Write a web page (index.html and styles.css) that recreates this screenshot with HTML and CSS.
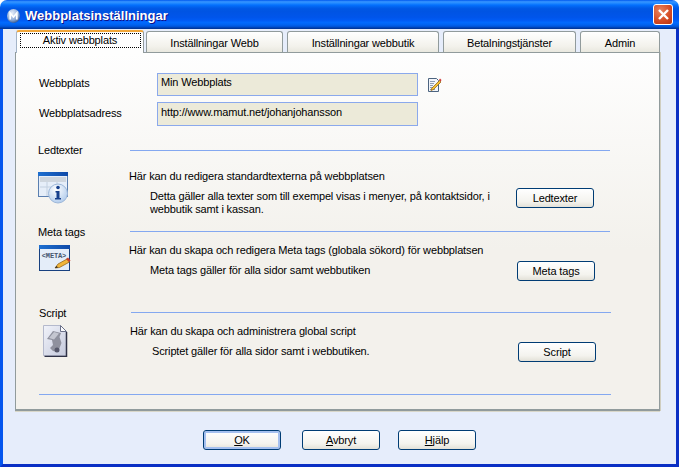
FILE: index.html
```html
<!DOCTYPE html>
<html lang="sv">
<head>
<meta charset="utf-8">
<title>Webbplatsinställningar</title>
<link rel="stylesheet" href="styles.css">
</head>
<body>
<div class="window">
  <header class="titlebar">
    <svg class="app-icon" width="13" height="14" viewBox="0 0 13 14">
      <defs><radialGradient id="ball" cx="0.4" cy="0.3" r="0.8"><stop offset="0" stop-color="#e6eefa"/><stop offset="0.6" stop-color="#8fabd6"/><stop offset="1" stop-color="#1d3f7a"/></radialGradient></defs>
      <ellipse cx="6.500" cy="7" rx="6.500" ry="7" fill="url(#ball)"/>
      <path d="M3.200 10.500V4L6.500 8 9.800 4v6.500" fill="none" stroke="#ffffff" stroke-width="1.700"/>
    </svg>
    <h1 class="title">Webbplatsinställningar</h1>
    <button class="close" type="button" aria-label="Stäng">
      <svg width="13" height="13" viewBox="0 0 13 13"><path d="M2 2l9 9M11 2l-9 9" stroke="#fff" stroke-width="2.400"/></svg>
    </button>
  </header>
  <div class="client">
    <nav class="tabs">
      <div class="tab tab-active"><span class="focus">Aktiv webbplats</span></div>
      <div class="tab tab-a">Inställningar Webb</div>
      <div class="tab tab-b">Inställningar webbutik</div>
      <div class="tab tab-c">Betalningstjänster</div>
      <div class="tab tab-d">Admin</div>
    </nav>
    <main class="panel">
      <div class="field-row field-row-1">
        <label class="field-label">Webbplats</label>
        <div class="field">Min Webbplats</div>
        <svg class="edit-icon" width="15" height="16" viewBox="0 0 15 16">
          <path d="M1.500 1.500h8l2 2v11h-10z" fill="#f2f5fa" stroke="#4d6480"/>
          <path d="M3 4.500h5M3 6.500h4M3 8.500h3M3 10.500h4M3 12.500h5" stroke="#8d9db3"/>
          <path d="M4.500 11.500l8-8 1.500 1.500-7.500 7.500-2.500 1z" fill="#f5c231" stroke="#8a5a10" stroke-width="0.700"/>
          <path d="M12 3l1-1.500 1.500 1.500-.8 1.500z" fill="#d23a3a"/>
        </svg>
      </div>
      <div class="field-row field-row-2">
        <label class="field-label">Webbplatsadress</label>
        <div class="field">http://www.mamut.net/johanjohansson</div>
      </div>

      <section class="section section-led">
        <div class="section-head"><span class="section-name">Ledtexter</span><span class="rule"></span></div>
        <div class="section-body">
          <div class="icon-cell">
            <svg width="32" height="32" viewBox="0 0 32 32">
              <defs>
                <linearGradient id="bar" x1="0" y1="0" x2="1" y2="0"><stop offset="0" stop-color="#1e6fd0"/><stop offset="1" stop-color="#0f4aa8"/></linearGradient>
                <radialGradient id="info" cx="0.4" cy="0.3" r="0.8"><stop offset="0" stop-color="#ffffff"/><stop offset="1" stop-color="#a9c6ea"/></radialGradient>
              </defs>
              <rect x="0.500" y="0.500" width="29" height="24" fill="#e6eef9" stroke="#5b7fb0"/>
              <rect x="0" y="0" width="30" height="4" fill="url(#bar)"/>
              <rect x="2" y="5" width="26" height="5" fill="#cfd6de"/>
              <path d="M9 10v14M19 10v6M2 15h18" stroke="#c3d0e0"/>
              <circle cx="20" cy="21.500" r="9.500" fill="url(#info)" stroke="#9db7d8"/>
              <circle cx="20" cy="15.500" r="1.800" fill="#17408c"/>
              <path d="M17.500 19h4v7h1.500v1.500h-6V26h1.500v-5.500h-1z" fill="#17408c"/>
            </svg>
          </div>
          <div class="copy">
            <p class="lead">Här kan du redigera standardtexterna på webbplatsen</p>
            <p class="detail">Detta gäller alla texter som till exempel visas i menyer, på kontaktsidor, i webbutik samt i kassan.</p>
          </div>
          <button class="btn btn-led" type="button">Ledtexter</button>
        </div>
      </section>

      <section class="section section-meta">
        <div class="section-head"><span class="section-name">Meta tags</span><span class="rule"></span></div>
        <div class="section-body">
          <div class="icon-cell">
            <svg width="32" height="27" viewBox="0 0 32 27">
              <rect x="0.500" y="0.500" width="30" height="25" fill="#e4edf9" stroke="#17407f"/>
              <rect x="0" y="0" width="31" height="4" fill="url(#bar)"/>
              <text class="meta-text" x="15" y="13" text-anchor="middle">&lt;META&gt;</text>
              <path d="M16 23l3-4 9-5 2.500 3-10 5.500z" fill="#f1b53a" stroke="#8a5a10" stroke-width="0.700"/>
              <path d="M27 14l2-1.500 2.500 3-1.500 1.500z" fill="#c8402e"/>
              <path d="M16 23l1.500-2 1.500 1.500z" fill="#222"/>
            </svg>
          </div>
          <div class="copy">
            <p class="lead">Här kan du skapa och redigera Meta tags (globala sökord) för webbplatsen</p>
            <p class="detail">Meta tags gäller för alla sidor samt webbutiken</p>
          </div>
          <button class="btn btn-meta" type="button">Meta tags</button>
        </div>
      </section>

      <section class="section section-script">
        <div class="section-head"><span class="section-name">Script</span><span class="rule"></span></div>
        <div class="section-body">
          <div class="icon-cell icon-script">
            <svg width="25" height="32" viewBox="0 0 25 32">
              <defs><linearGradient id="page" x1="0" y1="0" x2="1" y2="1"><stop offset="0" stop-color="#f1f3fa"/><stop offset="1" stop-color="#c4c9dc"/></linearGradient></defs>
              <path d="M0.500 0.500h17l6 6v24h-23z" fill="url(#page)" stroke="#b4b9cc"/>
              <path d="M23.500 7v24.500h-22" fill="none" stroke="#2e3146" stroke-width="1.500"/>
              <path d="M17.500 0.500v6h6z" fill="#fafbfe" stroke="#6a7088"/>
              <path d="M4 14l6-8 8 2-1.500 4 2 6-3.500 9-5-1-3-3 3-3-1-5z" fill="#8f919e"/>
              <path d="M6 13l5-6 5 1.500-5 6z" fill="#c4c6d0"/>
              <circle cx="14" cy="25" r="2.500" fill="#55576a"/>
            </svg>
          </div>
          <div class="copy">
            <p class="lead">Här kan du skapa och administrera global script</p>
            <p class="detail">Scriptet gäller för alla sidor samt i webbutiken.</p>
          </div>
          <button class="btn btn-script" type="button">Script</button>
        </div>
      </section>

      <div class="bottom-rule"></div>
    </main>
    <footer class="actions">
      <button class="btn btn-default" type="button"><u>O</u>K</button>
      <button class="btn" type="button"><u>A</u>vbryt</button>
      <button class="btn btn-help" type="button"><u>H</u>jälp</button>
    </footer>
  </div>
</div>
</body>
</html>
```
FILE: styles.css
```css
* { box-sizing: border-box; }
html, body { margin: 0; padding: 0; background: #ffffff; }
body { width: 679px; height: 467px; overflow: hidden; }
p, h1 { margin: 0; }

.window {
  width: 679px;
  height: 467px;
  display: flex;
  flex-direction: column;
  font: 11px/13px "Liberation Sans", Arial, sans-serif;
  letter-spacing: -0.14px;
  color: #000;
  border-radius: 7px 7px 0 0;
  overflow: hidden;
}

.titlebar {
  height: 29px;
  flex: none;
  display: flex;
  align-items: center;
  padding: 0 6px 0 7px;
  background: linear-gradient(180deg, #0058ee 0%, #3593ff 6%, #288eff 10%, #127dff 14%, #036ffc 18%, #0262ee 24%, #0057e5 30%, #0054e3 40%, #0055eb 60%, #005bf5 70%, #026afe 78%, #0062ef 86%, #0052d6 92%, #0040ab 96%, #003092 100%);
}
.app-icon { flex: none; margin: 3px 5px 0 0; }
.title {
  flex: 1;
  padding-top: 3px;
  font: bold 13px/16px "Liberation Sans", sans-serif;
  letter-spacing: 0;
  color: #fff;
  text-shadow: 1px 1px 0 #0f1089;
}
.close {
  width: 20px;
  height: 21px;
  padding: 0;
  display: flex;
  align-items: center;
  justify-content: center;
  border: 1px solid #fff;
  border-radius: 3px;
  background: radial-gradient(circle at 35% 30%, #e8835f, #d44a22 60%, #b8320f);
}

.client {
  flex: 1;
  position: relative;
  background: #e6edfb;
  border-left: 3px solid #0555ee;
  border-right: 3px solid #0a2fc4;
  border-bottom: 3px solid #0a2fc4;
  padding: 1px 16px 0 12px;
}

.tabs {
  height: 22px;
  display: flex;
  padding-left: 1px;
  position: relative;
  z-index: 1;
}
.tab {
  height: 21px;
  margin-top: 1px;
  margin-right: 4px;
  display: flex;
  align-items: center;
  justify-content: center;
  padding-top: 3px;
  background: linear-gradient(180deg, #ffffff, #f3f2ec 70%, #e9e8df);
  border: 1px solid #919b9c;
  border-bottom: 0;
  border-radius: 3px 3px 0 0;
}
.tab-a { width: 137px; }
.tab-b { width: 152px; }
.tab-c { width: 133px; }
.tab-d { width: 80px; margin-right: 0; }
.tab-active {
  width: 128px;
  height: 23px;
  margin-top: 0;
  margin-right: 2px;
  padding-top: 0;
  align-items: flex-start;
  background: #fefefe;
  border-top: 2px solid #f0a63a;
  border-left-color: #a4b4c8;
  border-right-color: #919b9c;
}
.focus {
  display: block;
  width: 121px;
  height: 15px;
  margin-top: 1px;
  text-align: center;
  line-height: 13px;
  border: 1px dotted #000;
}

.panel {
  height: 359px;
  background: linear-gradient(180deg, #fefefe, #f3f1ec 55%);
  border: 1px solid #919b9c;
  border-bottom-width: 2px;
  box-shadow: 0 1px 0 #d9d7c9, 1px 0 0 #d0cec0;
  padding: 20px 0 0 23px;
}

.field-row {
  height: 24px;
  display: flex;
  align-items: center;
}
.field-row-1 { height: 23px; }
.field-row-2 { margin-top: 6px; }
.field-label { width: 118px; flex: none; padding-bottom: 2px; }
.field {
  width: 261px;
  height: 24px;
  flex: none;
  padding: 3px 3px 0;
  background: #ecead9;
  border: 1px solid #8ba9ec;
}
.field-row-1 .field { height: 23px; padding-top: 2px; }
.edit-icon { margin-left: 9px; }

.section-led { margin: 18px 0 0 -1px; }
.section-meta { margin: 9px 0 0 -1px; }
.section-script { margin: 25px 0 0 0; }

.section-head {
  height: 13px;
  display: flex;
  align-items: center;
}
.section-name { width: 92px; flex: none; }
.section-meta .section-name,
.section-script .section-name { padding-top: 2px; }
.rule {
  width: 480px;
  height: 1px;
  background: #84a8f0;
}
.section-body {
  display: flex;
  align-items: flex-start;
  margin-top: 13px;
}
.section-meta .section-body { margin-top: 6px; }
.section-script .section-body { margin-top: 6px; }

.icon-cell { width: 91px; flex: none; padding-top: 2px; }
.section-meta .icon-cell { padding: 1px 0 0 1px; }
.section-script .icon-cell { padding: 0 0 0 4px; }
.icon-cell svg { display: block; }
.meta-text { font: bold 7px "Liberation Mono", monospace; fill: #45566e; }

.copy { width: 387px; flex: none; }
.section-meta .copy,
.section-script .copy { width: 388px; }
.lead { height: 13px; white-space: nowrap; }
.detail { margin-top: 7px; padding-left: 21px; width: 370px; }
.section-script .detail { padding-left: 22px; }

.btn {
  width: 78px;
  height: 20px;
  padding: 0;
  font: 11px/13px "Liberation Sans", Arial, sans-serif;
  letter-spacing: -0.14px;
  color: #000;
  border: 1px solid #003c74;
  border-radius: 3px;
  background: linear-gradient(180deg, #ffffff, #f4f3ee 70%, #e3e1d8);
}
.btn-led { margin-top: 18px; }
.btn-meta { margin-top: 17px; }
.btn-script { margin-top: 17px; }
.btn-default { box-shadow: inset 0 0 0 2px #a5c0ef; }

.bottom-rule {
  width: 572px;
  height: 1px;
  margin-top: 32px;
  background: #84a8f0;
}

.actions {
  display: flex;
  gap: 21px;
  padding: 19px 0 0 188px;
}
.btn-help { margin-left: -3px; }
```
